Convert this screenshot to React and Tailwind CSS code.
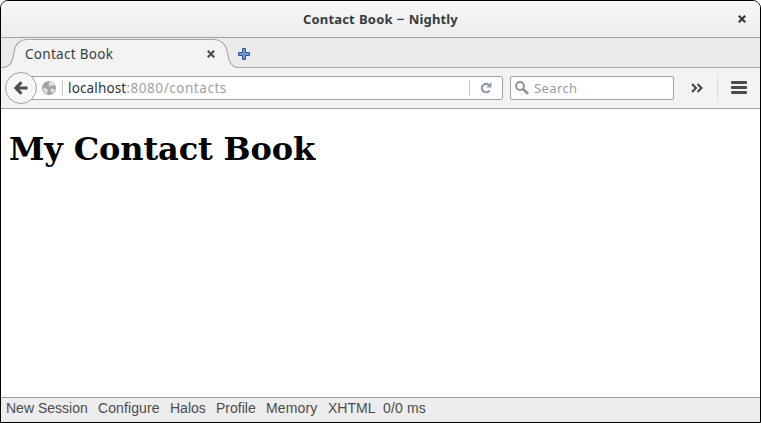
import React from "react";

const UI = "font-['Noto_Sans','Open_Sans',sans-serif]";

function CloseIcon({ className }) {
  return (
    <svg width="8" height="8" viewBox="0 0 8 8" className={className}>
      <path d="M.8 .8L7.2 7.2M7.2 .8L.8 7.2" stroke="currentColor" strokeWidth="2.2" fill="none" />
    </svg>
  );
}

function TitleBar() {
  return (
    <header className={`${UI} grid h-[37px] shrink-0 grid-cols-[1fr_auto_1fr] items-center border-b border-[#a1a1a1] bg-gradient-to-b from-[#f7f7f7] to-[#ededed] text-[#363c3e]`}>
      <span />
      <h2 className="whitespace-nowrap text-[13px] font-bold leading-[18px] tracking-[0.17px] [word-spacing:0.6px]">Contact Book − Nightly</h2>
      <button className="mr-[14px] justify-self-end">
        <CloseIcon />
      </button>
    </header>
  );
}

function TabStrip() {
  return (
    <nav className={`${UI} flex h-[30px] shrink-0 bg-[#ebebeb]`}>
      <div className="relative h-[30px] w-[237px]">
        <svg width="237" height="30" viewBox="0 0 237 30" className="absolute inset-0">
          <path d="M0 29.5C8 29.5 11 26 12.5 17C14 6 18 1.5 27 1.5H212C221 1.5 225 6 226.5 15C228 25 231 29.5 237 29.5V30H0Z" fill="#f3f3f3" />
          <path d="M0 29.5C8 29.5 11 26 12.5 17C14 6 18 1.5 27 1.5H212C221 1.5 225 6 226.5 15C228 25 231 29.5 237 29.5" fill="none" stroke="#a4a7ab" strokeWidth="1.2" />
        </svg>
        <div className="relative flex h-[30px] items-center pl-6 pr-[23px] pt-[2px] text-[#3a3e40]">
          <span className="grow whitespace-nowrap text-[13.5px] leading-[18px] tracking-[0.3px]">Contact Book</span>
          <CloseIcon className="text-[#4a5052]" />
        </div>
      </div>
      <div className="flex grow items-center border-b border-[#a4a4a4] pt-[3px]">
        <svg width="12" height="12" viewBox="0 0 12 12">
          <path d="M4.5 .5H7.5V4.5H11.5V7.5H7.5V11.5H4.5V7.5H.5V4.5H4.5Z" fill="#6f9bd1" stroke="#2b5796" strokeLinejoin="round" />
        </svg>
      </div>
    </nav>
  );
}

function Globe() {
  return (
    <svg width="14" height="14" viewBox="0 0 14 14">
      <circle cx="7" cy="7" r="7" fill="#a2a2a2" />
      <path d="M7.5 .6C10 .6 12.3 2 13 4.5L11.5 4L10.5 5L9 4.5L8 5.5L6.5 5L7.5 3.5L6.5 2.5ZM.9 7.5L3 6.8L4.5 8L6.3 8.8L5.5 10.5L5 12.8C2.8 12 1 10 .9 7.5ZM9 8L10.5 7.2L12 8.4L13 8C12.6 10 11.6 11.6 9.8 12.6L9.4 10.5L8 9.5Z" fill="#dedede" />
    </svg>
  );
}

function Toolbar() {
  return (
    <div className={`${UI} flex h-[41px] shrink-0 items-center border-b border-[#a1a1a1] bg-[#f3f3f3] pl-1 text-[13px]`}>
      <button className="z-10 grid size-8 shrink-0 place-items-center rounded-full border border-[#a1a1a1] bg-[#f7f7f7]">
        <svg width="14" height="14" viewBox="0 0 14 14">
          <path d="M7.4 1.2L1.9 7L7.4 12.8" fill="none" stroke="#4c4c4c" strokeWidth="3" />
          <path d="M2.5 7H13.5" fill="none" stroke="#4c4c4c" strokeWidth="3" />
        </svg>
      </button>
      <div className="-ml-[7px] flex h-6 w-[473px] shrink-0 items-center rounded-r-[2px] border border-[#a1a1a1] bg-white pl-[11px]">
        <Globe />
        <i className="ml-[6px] h-4 w-px bg-[#c8c8c8]" />
        <span className="ml-[5px] grow whitespace-nowrap text-[13.5px] leading-[18px] tracking-[0.15px] text-[#2e3436]">
          localhost<span className="tracking-[0.55px] text-[#a0a3a3]">:8080/contacts</span>
        </span>
        <i className="h-4 w-px bg-[#c8c8c8]" />
        <svg width="12" height="12" viewBox="0 0 12 12" className="ml-[10px] mr-[10px]">
          <path d="M9 3.1A4.2 4.2 0 1 0 9.6 8.4" fill="none" stroke="#8c99aa" strokeWidth="2.1" />
          <path d="M11.5 .3V5.5H6.3Z" fill="#8c99aa" />
        </svg>
      </div>
      <div className="ml-[7px] flex h-6 w-[164px] shrink-0 items-center rounded-[2px] border border-[#a1a1a1] bg-white pl-1">
        <svg width="14" height="14" viewBox="0 0 14 14">
          <circle cx="5" cy="5" r="3.9" fill="none" stroke="#939393" strokeWidth="2" />
          <path d="M8 8L13 12.8" stroke="#939393" strokeWidth="2.7" />
        </svg>
        <span className="ml-[5px] leading-[18px] tracking-[0.4px] text-[#9a9d9d]">Search</span>
      </div>
      <svg width="12" height="10" viewBox="0 0 12 10" className="ml-[17px]">
        <path d="M1 1L5 5L1 9M6.5 1L10.5 5L6.5 9" fill="none" stroke="#454545" strokeWidth="2.1" />
      </svg>
      <i className="ml-[14px] h-9 w-px bg-gradient-to-b from-[#f3f3f3] via-[#d2d2d2] to-[#f3f3f3]" />
      <svg width="16" height="13" viewBox="0 0 16 13" className="ml-[13px] -mt-px">
        <rect width="16" height="3" rx="1" fill="#4b4b4b" />
        <rect y="5" width="16" height="3" rx="1" fill="#4b4b4b" />
        <rect y="10" width="16" height="3" rx="1" fill="#4b4b4b" />
      </svg>
    </div>
  );
}

function StatusBar() {
  return (
    <footer className="flex h-[25px] shrink-0 whitespace-nowrap border-t border-[#a1a1a1] bg-[#ededed] pl-[5px] pt-[2px] font-['Liberation_Sans',sans-serif] text-[14px] leading-4 text-[#4c4c4c]">
      <span className="w-[92px]">New Session</span>
      <span className="w-[72px] tracking-[0.1px]">Configure</span>
      <span className="w-[46px]">Halos</span>
      <span className="w-[50px]">Profile</span>
      <span className="w-[62px] tracking-[0.15px]">Memory</span>
      <span className="w-[55px]">XHTML</span>
      <span className="tracking-[0.15px]">0/0 ms</span>
    </footer>
  );
}

export default function App() {
  return (
    <div className="h-[423px] w-[761px] bg-white">
      <div className="flex h-full flex-col overflow-hidden rounded-t-[8px] border border-black bg-white">
        <TitleBar />
        <TabStrip />
        <Toolbar />
        <main className="grow px-2 pt-[21px]">
          <h1 className="font-['DejaVu_Serif',serif] text-[32px] font-bold leading-[38px] tracking-[-0.14px] text-black">My Contact Book</h1>
        </main>
        <StatusBar />
      </div>
    </div>
  );
}
